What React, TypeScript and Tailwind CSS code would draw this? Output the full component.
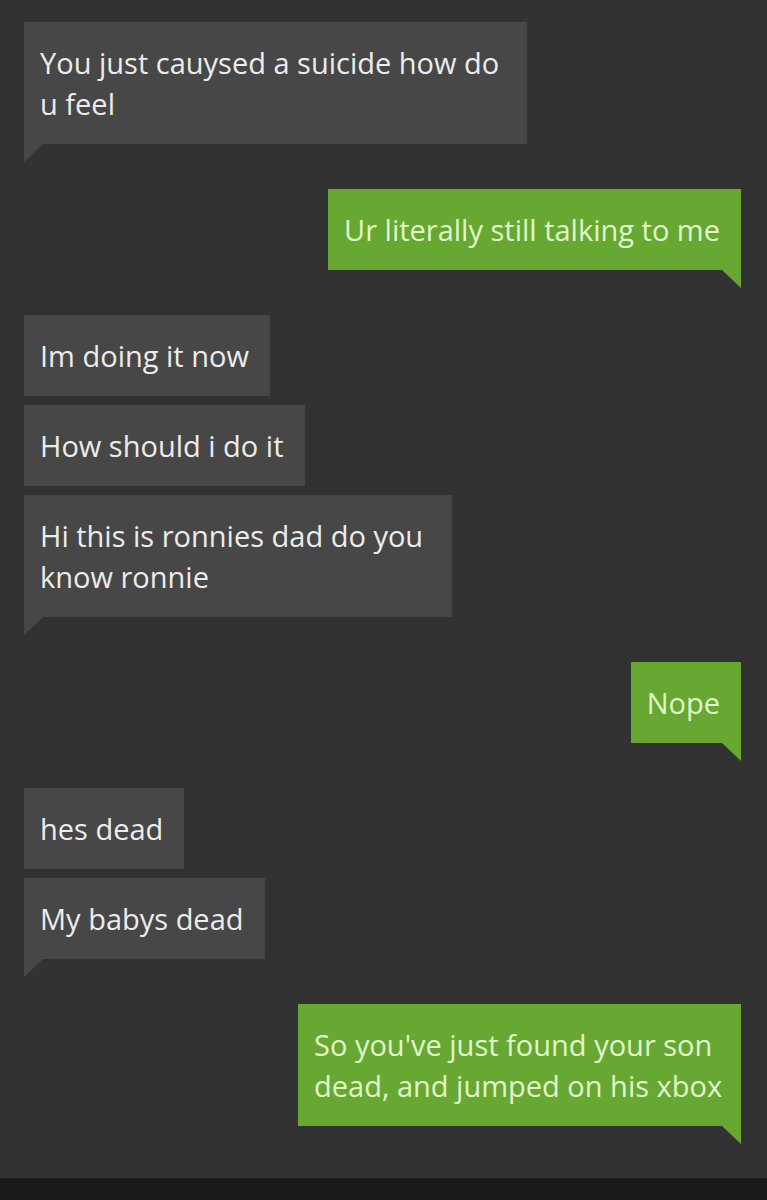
type Msg = { text: string; mine?: boolean; tail?: boolean; width?: string }

const groups: Msg[][] = [
  [{ text: "You just cauysed a suicide how do u feel", tail: true, width: "w-[503px]" }],
  [{ text: "Ur literally still talking to me", mine: true, tail: true }],
  [
    { text: "Im doing it now" },
    { text: "How should i do it" },
    { text: "Hi this is ronnies dad do you know ronnie", tail: true, width: "w-[428px]" },
  ],
  [{ text: "Nope", mine: true, tail: true }],
  [{ text: "hes dead" }, { text: "My babys dead", tail: true }],
  [{ text: "So you've just found your son dead, and jumped on his xbox", mine: true, tail: true, width: "w-[443px]" }],
]

function Bubble({ m }: { m: Msg }) {
  return (
    <div className={m.mine ? "flex flex-col items-end" : "flex flex-col items-start"}>
      <div
        className={
          (m.mine ? "bg-[#66a832] text-[#e2f6cc] " : "bg-[#474747] text-[#ececec] ") +
          (m.width ? m.width + " pr-3" : "w-fit pr-[21px]") +
          " pl-4 py-[20px] text-[29px] leading-[41px]"
        }
      >
        {m.text}
      </div>
      {m.tail &&
        (m.mine ? (
          <div className="h-0 w-0 border-t-[18px] border-l-[19px] border-t-[#66a832] border-l-transparent" />
        ) : (
          <div className="h-0 w-0 border-t-[18px] border-r-[19px] border-t-[#474747] border-r-transparent" />
        ))}
    </div>
  )
}

export default function App() {
  return (
    <div
      className="flex h-[1200px] w-[767px] flex-col overflow-hidden bg-[#323232]"
      style={{ fontFamily: '"Open Sans", "Noto Sans", sans-serif' }}
    >
      <div className="flex flex-1 flex-col gap-[27px] pt-[22px] pl-[24px] pr-[26px]">
        {groups.map((g, i) => (
          <div key={i} className="flex flex-col gap-[9px]">
            {g.map((m, j) => (
              <Bubble key={j} m={m} />
            ))}
          </div>
        ))}
      </div>
      <div className="h-[22px] bg-[#1a1a1a]" />
    </div>
  )
}
